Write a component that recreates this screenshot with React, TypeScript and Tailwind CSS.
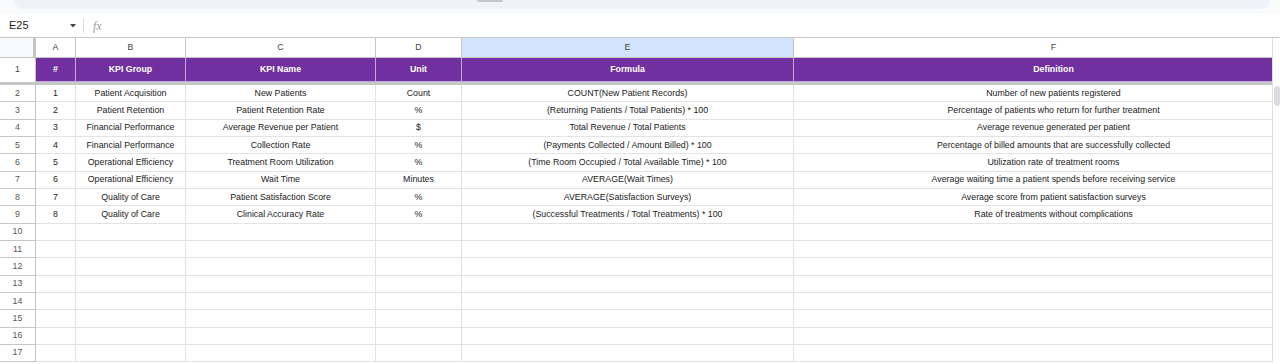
const columns = [
  { key: "A", width: "w-[40px]" },
  { key: "B", width: "w-[110px]" },
  { key: "C", width: "w-[190px]" },
  { key: "D", width: "w-[86px]" },
  { key: "E", width: "w-[332px]" },
  { key: "F", width: "w-[520px]" },
];

const headers = ["#", "KPI Group", "KPI Name", "Unit", "Formula", "Definition"];

const rows: string[][] = [
  ["1", "Patient Acquisition", "New Patients", "Count", "COUNT(New Patient Records)", "Number of new patients registered"],
  ["2", "Patient Retention", "Patient Retention Rate", "%", "(Returning Patients / Total Patients) * 100", "Percentage of patients who return for further treatment"],
  ["3", "Financial Performance", "Average Revenue per Patient", "$", "Total Revenue / Total Patients", "Average revenue generated per patient"],
  ["4", "Financial Performance", "Collection Rate", "%", "(Payments Collected / Amount Billed) * 100", "Percentage of billed amounts that are successfully collected"],
  ["5", "Operational Efficiency", "Treatment Room Utilization", "%", "(Time Room Occupied / Total Available Time) * 100", "Utilization rate of treatment rooms"],
  ["6", "Operational Efficiency", "Wait Time", "Minutes", "AVERAGE(Wait Times)", "Average waiting time a patient spends before receiving service"],
  ["7", "Quality of Care", "Patient Satisfaction Score", "%", "AVERAGE(Satisfaction Surveys)", "Average score from patient satisfaction surveys"],
  ["8", "Quality of Care", "Clinical Accuracy Rate", "%", "(Successful Treatments / Total Treatments) * 100", "Rate of treatments without complications"],
];

const emptyRows = Array.from({ length: 8 }, () => ["", "", "", "", "", ""]);

const App = () => {
  const allRows = [...rows, ...emptyRows];

  return (
    <div className="w-[1280px] h-[364px] overflow-hidden bg-white font-['Liberation_Sans',Arial,sans-serif] text-[8.8px] text-[#1a1a1a]">
      {/* top toolbar remnant */}
      <div className="h-[14px] bg-[#f9fbfd] pl-[14px] pr-[10px]">
        <div className="h-[9px] rounded-b-[14px] bg-[#eef2f9] flex">
          <div className="ml-[463px] w-[26px] h-[2px] rounded-b-[3px] bg-[#c4c7cc]" />
        </div>
      </div>

      {/* formula bar */}
      <div className="h-[24px] flex items-center border-b border-[#c4c7c5]">
        <div className="w-[70px] pl-[9px] text-[11px] text-[#1f1f1f]">E25</div>
        <svg width="6" height="4" viewBox="0 0 6 4">
          <path d="M0 0 L6 0 L3 3.5 Z" fill="#444" />
        </svg>
        <div className="ml-[7px] w-px h-[14px] bg-[#dadce0]" />
        <span className="ml-[9px] text-[12px] italic text-[#9aa0a6] font-['Liberation_Serif',serif]">fx</span>
      </div>

      <div className="flex">
        <div className="w-[1272px] overflow-hidden">
          <div className="w-[1314px]">
            {/* column letters */}
            <div className="flex h-[20px]">
              <div className="w-[36px] bg-[#f8f9fa] border-r-[3px] border-r-[#c4c7c5] border-b border-b-[#c4c7c5]" />
              {columns.map((c) => (
                <div
                  key={c.key}
                  className={`${c.width} flex items-center justify-center border-r border-b border-[#c4c7c5] text-[#444] ${
                    c.key === "E" ? "bg-[#d3e3fd] text-[#0b57d0]" : "bg-white"
                  }`}
                >
                  {c.key}
                </div>
              ))}
            </div>

            {/* header row 1 */}
            <div className="flex h-[24px]">
              <div className="w-[36px] flex items-center justify-center text-[#444] border-r border-[#c4c7c5]">1</div>
              {columns.map((c, i) => (
                <div
                  key={c.key}
                  className={`${c.width} flex items-center justify-center bg-[#7030a0] border-r border-[#c7a6e0] border-b border-b-[#c7a6e0] text-white font-bold`}
                >
                  {headers[i]}
                </div>
              ))}
            </div>

            {/* freeze line */}
            <div className="h-[3px] bg-[#c4c7c5]" />

            {allRows.map((r, idx) => (
              <div key={idx} className="flex h-[17.33px]">
                <div className="w-[36px] flex items-center justify-center text-[#555] bg-white border-r border-b border-[#c4c7c5]">
                  {idx + 2}
                </div>
                {columns.map((c, i) => (
                  <div
                    key={c.key}
                    className={`${c.width} flex items-center justify-center border-r border-b border-[#e2e3e3] whitespace-nowrap`}
                  >
                    {r[i]}
                  </div>
                ))}
              </div>
            ))}
          </div>
        </div>

        {/* vertical scrollbar */}
        <div className="w-[8px] border-l border-[#e0e0e0] bg-white">
          <div className="h-[48px]" />
          <div className="mx-auto w-[6px] h-[20px] rounded-[3px] bg-[#dadce0]" />
        </div>
      </div>
    </div>
  );
};

export default App;
